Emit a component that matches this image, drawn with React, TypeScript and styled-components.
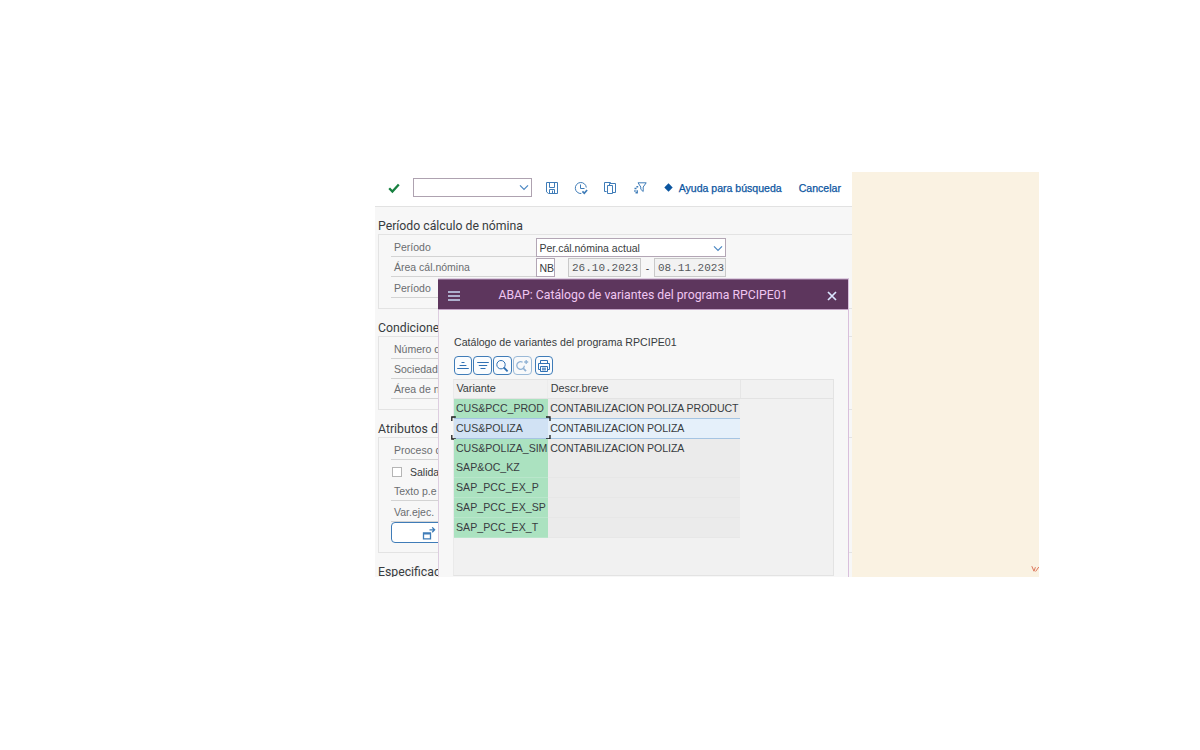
import React from 'react';
import styled, { createGlobalStyle } from 'styled-components';

const Global = createGlobalStyle`
  * { box-sizing: border-box; }
  body { margin: 0; background: #fff; }
  svg { display: block; flex: none; }
`;

const ui = '"Liberation Sans", Arial, sans-serif';
const heading = 'Roboto, "Liberation Sans", sans-serif';

const Page = styled.main`
  width: 1200px;
  height: 750px;
  padding: 172px 161px 173px 375px;
  overflow: hidden;
  background: #fff;
  font-family: ${ui};
  font-size: 10.5px;
  color: #383c40;
`;
const Frame = styled.div`
  position: relative;
  display: grid;
  grid-template-columns: 477px 187px;
  height: 405px;
  overflow: hidden;
`;
const Screen = styled.section`
  display: flex;
  flex-direction: column;
  overflow: hidden;
  background: #f7f7f7;
`;
const SidePanel = styled.aside`
  display: flex;
  align-items: flex-end;
  justify-content: flex-end;
  padding-bottom: 4px;
  background: #faf2e2;
`;
const Mark = styled.svg`
  color: #d9694c;
`;

const Toolbar = styled.div`
  display: flex;
  align-items: center;
  flex: none;
  height: 35px;
  padding: 0 0 3px 13px;
  background: #fff;
  border-bottom: 1px solid #e2e2e2;
  color: #3f7cb8;
`;
const Command = styled.div`
  display: flex;
  align-items: center;
  justify-content: flex-end;
  width: 119px;
  height: 19px;
  margin: 0 12.5px 0 13px;
  padding-right: 2px;
  background: #fff;
  border: 1px solid #aea2b0;
`;
const ToolIcons = styled.div`
  display: flex;
  gap: 15.4px;
  margin: 1px 17.5px 0 0;
`;
const Action = styled.span<{ $ml?: number }>`
  margin-left: ${p => p.$ml ?? 0}px;
  padding-top: 1px;
  color: #0b559f;
  font-size: 10.55px;
  -webkit-text-stroke: 0.25px #0b559f;
  white-space: nowrap;
`;

const Body = styled.div`
  padding: 9px 0 0 3px;
`;
const GroupTitle = styled.h2`
  margin: 0;
  height: 18px;
  font: 400 12.25px/20px ${heading};
  white-space: nowrap;
`;
const Group = styled.div<{ $h: number }>`
  height: ${p => p.$h}px;
  margin-bottom: 9.2px;
  padding: 3px 0 0 12px;
  border: 1px solid #e3e3e3;
  border-right: 0;
`;
const Row = styled.div`
  display: flex;
  align-items: flex-start;
  height: 20.4px;
`;
const Label = styled.div`
  flex: none;
  width: 144.5px;
  height: 19px;
  padding-left: 3px;
  border-bottom: 1px solid #d3d3d3;
  color: #6a6d70;
  line-height: 19px;
`;
const Field = styled.div<{ $w: number; $ml?: number; $off?: boolean }>`
  display: flex;
  align-items: center;
  justify-content: space-between;
  flex: none;
  width: ${p => p.$w}px;
  height: 19px;
  margin-left: ${p => p.$ml ?? 0}px;
  padding: 1px 2px 0 3px;
  overflow: hidden;
  background: ${p => (p.$off ? '#f2f2f2' : '#fff')};
  border: 1px solid ${p => (p.$off ? '#c9c9c9' : '#b3a6b5')};
  color: ${p => (p.$off ? '#55585b' : '#383c40')};
  font-family: ${p => (p.$off ? '"Liberation Mono", monospace' : ui)};
  font-size: ${p => (p.$off ? 11 : 10.5)}px;
  white-space: nowrap;
`;
const Dash = styled.span`
  width: 13px;
  line-height: 20px;
  text-align: center;
`;
const CheckRow = styled(Row)`
  align-items: center;
  gap: 8px;
  padding-left: 1px;
`;
const CheckBox = styled.span`
  width: 10px;
  height: 10px;
  background: #fff;
  border: 1px solid #b5b5b5;
`;
const RunButton = styled.div`
  display: flex;
  align-items: center;
  width: 130px;
  height: 21px;
  margin-top: -0.6px;
  padding: 2px 0 0 30px;
  background: #fff;
  border: 1px solid #3f7cb8;
  border-radius: 4px;
  color: #3f7cb8;
`;

const Dialog = styled.section`
  position: absolute;
  left: 63px;
  top: 106px;
  display: flex;
  flex-direction: column;
  width: 411px;
  height: 310px;
  background: #f7f7f7;
  border: 1px solid #ddcde0;
  border-right-color: #d9bfdc;
`;
const DialogBar = styled.header`
  display: flex;
  align-items: center;
  justify-content: space-between;
  flex: none;
  height: 31px;
  margin: 0 0 0 -1px;
  padding: 2px 11px 0 10px;
  background: #5d365d;
  border-top: 1px solid #8e6b90;
  border-bottom: 1px solid #c3a3c6;
  color: #c9d9f3;
`;
const DialogTitle = styled.h1`
  margin: 0 1px 1px 0;
  color: #f0c6f2;
  font: 400 12.25px/16px ${heading};
  white-space: nowrap;
`;
const DialogBody = styled.div`
  display: flex;
  flex-direction: column;
  padding: 24px 12px 0 15px;
`;
const Caption = styled.div`
  height: 20px;
  line-height: 16px;
  font-size: 10.6px;
`;
const GridTools = styled.div`
  display: flex;
  gap: 1px;
  margin: 2px 0 4px -0.5px;
`;
const ToolButton = styled.span<{ $dim?: boolean; $ml?: number }>`
  display: flex;
  align-items: center;
  justify-content: center;
  width: 18.8px;
  height: 19px;
  margin-left: ${p => p.$ml ?? 0}px;
  background: #fafcfe;
  border: 1.4px solid #3f7cb8;
  border-radius: 4px;
  color: #2f70b3;
  opacity: ${p => (p.$dim ? 0.5 : 1)};
`;
const Table = styled.div`
  width: 381px;
  height: 197px;
  margin-left: -1px;
  background: #f1f1f1;
  border: 1px solid #e3e3e3;
  border-left-color: #eaeaea;
`;
const HeadRow = styled.div`
  display: grid;
  grid-template-columns: 94px 192.5px 1fr;
  height: 19px;
  border-bottom: 1px solid #e3e3e3;
`;
const HeadCell = styled.div`
  padding-left: 2.8px;
  border-right: 1px solid #e6e6e6;
  font-size: 10.8px;
  line-height: 16.5px;
  &:first-child { border-right-color: #ececec; padding-left: 2.4px; }
  &:last-child { border-right: 0; }
`;
const DataRow = styled.div`
  position: relative;
  display: grid;
  grid-template-columns: 94px 192px;
  width: 286px;
  height: 19.8px;
  font: 10.6px/19px ${ui};
`;
const Cell = styled.div<{ $key?: boolean; $on?: boolean; $ls?: number }>`
  padding-left: ${p => (p.$key ? 2 : 2.3)}px;
  background: ${p => (p.$on ? (p.$key ? '#d1e2f4' : '#e5f0fa') : p.$key ? '#abe2c0' : '#ebebeb')};
  border-bottom: 1px solid ${p => (p.$on ? '#a5c4e2' : p.$key ? '#b9e6cb' : '#e7e7e7')};
  box-shadow: ${p => (p.$on ? '0 -1px 0 #a5c4e2' : 'none')};
  letter-spacing: ${p => p.$ls ?? 0}px;
  white-space: nowrap;
`;
const Focus = styled.svg`
  position: absolute;
  left: -3px;
  top: -3px;
`;

const Chevron = () => (
  <svg width="10" height="7" viewBox="0 0 10 7" fill="none" stroke="#4a86c2" strokeWidth="1.2">
    <path d="M1 1.3 5 5.3 9 1.3" />
  </svg>
);

const icon = { width: 14, height: 14, viewBox: '0 0 14 14', fill: 'none', stroke: 'currentColor', strokeWidth: 1 };

const Save = () => (
  <svg {...icon}><path d="M1.5 1.5h11v11h-9l-2-1.6zM4.5 1.5v5h5v-5M4.5 12.3V8.5h5v4M7.5 9.5v2.5" /></svg>
);
const Clock = () => (
  <svg {...icon}><path d="M12.3 6.5A5.5 5.5 0 1 0 7.3 12.5M6.5 3.5v4h4" /><path d="m8.4 10.3 1.9 1.9 2.8-3.2" strokeWidth="1.7" /></svg>
);
const Copy = () => (
  <svg {...icon}><path d="M3.6 10.5H1.5v-9h6l1 1M4.5 4.5h5v8h-5zM6.5 4V2.5h6v9h-3" /></svg>
);
const Filter = () => (
  <svg {...icon}><path d="M5 1.8h8.2L10.2 6v4.5L7.8 8.3V6z" /><path d="M1.5 7.5h2M2.5 11.8h2.3M1.2 10h1.5M4.2 9.2v3M3.4 5.8h1.8" strokeWidth="1.4" /></svg>
);

const sizes = { width: 16, height: 16, viewBox: '0 0 16 16', fill: 'none', stroke: 'currentColor' };

const variants: [string, string][] = [
  ['CUS&PCC_PROD', 'CONTABILIZACION POLIZA PRODUCT'],
  ['CUS&POLIZA', 'CONTABILIZACION POLIZA'],
  ['CUS&POLIZA_SIM', 'CONTABILIZACION POLIZA'],
  ['SAP&OC_KZ', ''],
  ['SAP_PCC_EX_P', ''],
  ['SAP_PCC_EX_SP', ''],
  ['SAP_PCC_EX_T', ''],
];

export default function App() {
  return (
    <Page>
      <Global />
      <Frame>
        <Screen>
          <Toolbar>
            <svg width="12" height="12" viewBox="0 0 12 12" fill="none" stroke="#178040" strokeWidth="2.3">
              <path d="m1.2 6.3 3.2 3.3 6.4-7.1" />
            </svg>
            <Command><Chevron /></Command>
            <ToolIcons><Save /><Clock /><Copy /><Filter /></ToolIcons>
            <svg width="9" height="9" viewBox="0 0 9 9"><path d="M4.5.3 8.7 4.5l-4.2 4.2L.3 4.5z" fill="#0b559f" /></svg>
            <Action $ml={5.5}>Ayuda para búsqueda</Action>
            <Action $ml={17}>Cancelar</Action>
          </Toolbar>
          <Body>
            <GroupTitle>Período cálculo de nómina</GroupTitle>
            <Group $h={74.5}>
              <Row><Label>Período</Label><Field $w={190.5}>Per.cál.nómina actual<Chevron /></Field></Row>
              <Row>
                <Label>Área cál.nómina</Label>
                <Field $w={19.5}>NB</Field>
                <Field $w={73} $ml={13} $off>26.10.2023</Field>
                <Dash>-</Dash>
                <Field $w={72} $off>08.11.2023</Field>
              </Row>
              <Row><Label>Período</Label></Row>
            </Group>
            <GroupTitle>Condicione</GroupTitle>
            <Group $h={74.5}>
              <Row><Label>Número d</Label></Row>
              <Row><Label>Sociedad</Label></Row>
              <Row><Label>Área de n</Label></Row>
            </Group>
            <GroupTitle>Atributos d</GroupTitle>
            <Group $h={115.5}>
              <Row><Label>Proceso d</Label></Row>
              <CheckRow><CheckBox />Salida</CheckRow>
              <Row><Label>Texto p.e</Label></Row>
              <Row><Label>Var.ejec.</Label></Row>
              <RunButton>
                <svg width="14" height="14" viewBox="0 0 14 14" fill="none" stroke="currentColor" strokeWidth="1.3">
                  <path d="M1.5 5.8h7v6h-7zM1.5 6.8h7M7.5 2.8h5M10.2.4l2.4 2.4-2.4 2.4" />
                </svg>
              </RunButton>
            </Group>
            <GroupTitle>Especificac</GroupTitle>
          </Body>
        </Screen>
        <SidePanel>
          <Mark width="8" height="8" viewBox="0 0 8 8" fill="none" stroke="currentColor" strokeWidth="0.9">
            <path d="m.8 1.2 2.2 5 1.4-4M4.6 6.5 7.8 2" />
          </Mark>
        </SidePanel>
        <Dialog>
          <DialogBar>
            <svg width="12" height="10" viewBox="0 0 12 10" stroke="currentColor" strokeWidth="1.6"><path d="M0 1h12M0 5h12M0 9h12" /></svg>
            <DialogTitle>ABAP: Catálogo de variantes del programa RPCIPE01</DialogTitle>
            <svg width="10" height="10" viewBox="0 0 10 10" stroke="#dbe7ff" strokeWidth="1.7"><path d="m1 1 8 8M9 1 1 9" /></svg>
          </DialogBar>
          <DialogBody>
            <Caption>Catálogo de variantes del programa RPCIPE01</Caption>
            <GridTools>
              <ToolButton><svg {...sizes}><path d="M6.5 4.5h3M4.6 7.5h6.8M2.2 10.5h11.6" /></svg></ToolButton>
              <ToolButton><svg {...sizes}><path d="M2.2 4.5h11.6M3.8 7.5h8.4M5.5 10.5h5" /></svg></ToolButton>
              <ToolButton><svg {...sizes}><circle cx="7" cy="6.7" r="4.2" /><path d="m9.8 9.5 3.8 3.8" strokeWidth="1.8" /></svg></ToolButton>
              <ToolButton $dim><svg {...sizes} strokeWidth="1.3"><path d="M8.6 4.3a3.8 3.8 0 1 0 1.8 3.4M12.2 2v4M10.2 4h4" /><path d="m9 10 3 3.2" strokeWidth="1.8" /></svg></ToolButton>
              <ToolButton $ml={2}><svg {...sizes}><path d="M4.5 5.2V2.5h7v2.7M4.4 11.5H2.5v-6h11v6h-2M4.5 8.5h7v5h-7zM6 10.2h4M6 11.8h4" /></svg></ToolButton>
            </GridTools>
            <Table>
              <HeadRow><HeadCell>Variante</HeadCell><HeadCell>Descr.breve</HeadCell><HeadCell /></HeadRow>
              {variants.map(([name, text], i) => (
                <DataRow key={name}>
                  <Cell $key $on={i === 1} $ls={i < 3 ? -0.03 : 0.03}>{name}</Cell>
                  <Cell $on={i === 1} $ls={-0.08}>{text}</Cell>
                  {i === 1 && (
                    <Focus width="100" height="25" viewBox="0 0 100 25" fill="none" stroke="#1c1c1c" strokeWidth="1.3">
                      <path d="M.8 5V1h4M95 1h4v4M.8 19v4h4M95 23h4v-4" />
                    </Focus>
                  )}
                </DataRow>
              ))}
            </Table>
          </DialogBody>
        </Dialog>
      </Frame>
    </Page>
  );
}
